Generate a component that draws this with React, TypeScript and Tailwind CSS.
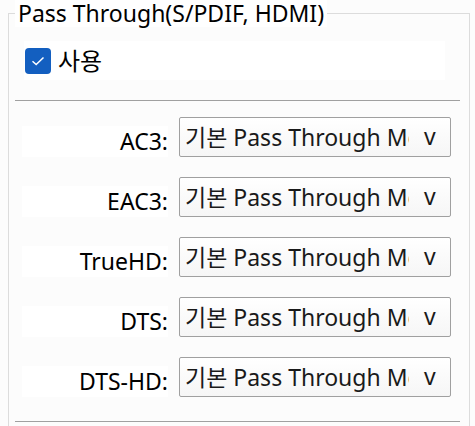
import React from "react";

const font = { fontFamily: '"Segoe UI", "Noto Sans", "Noto Sans CJK KR", sans-serif' };

const codecs = ["AC3", "EAC3", "TrueHD", "DTS", "DTS-HD"];

function Select() {
    return (
        <div className="flex h-[40px] w-[272px] items-center rounded-[2px] border border-[#a0a0a0] bg-gradient-to-b from-white to-[#f6f6f6] pl-[5px]">
            <span className="w-[224px] overflow-hidden whitespace-nowrap text-[23px] leading-[32px] text-[#1a1a1a]">
                기본 Pass Through Mode
            </span>
            <span className="ml-[15px] pb-[2px] text-[23px] leading-none text-[#1a1a1a]">v</span>
        </div>
    );
}

export default function App() {
    return (
        <div className="h-[426px] w-[475px] overflow-hidden bg-[#fcfcfc]" style={font}>
            <fieldset className="ml-[8px] w-[462px] border border-[#dcdcdc] pb-[20px] pl-[6px] pr-[9px]">
                <legend className="bg-white px-[3px] text-[23px] leading-[27px] text-black">
                    Pass Through(S/PDIF, HDMI)
                </legend>
                <div className="ml-[9px] mt-[14px] flex h-[39px] w-[421px] items-center bg-white pl-[1px]">
                    <div className="flex h-[26px] w-[26px] items-center justify-center rounded-[4px] bg-[#135fc0]">
                        <svg width="14" height="10" viewBox="0 0 14 10" fill="none">
                            <path d="M1.5 5.2 L5.2 8.5 L12.5 1.5" stroke="white" strokeWidth="1.5" />
                        </svg>
                    </div>
                    <span className="ml-[7px] text-[24px] leading-none text-black">사용</span>
                </div>
                <div className="mt-[20px] h-px w-[445px] bg-[#a0a0a0]" />
                <div className="flex flex-col gap-[20px] pt-[16px]">
                    {codecs.map((c) => (
                        <div key={c} className="flex items-end">
                            <div className="ml-[7px] flex h-[31px] w-[146px] items-center justify-end bg-white text-[23px] leading-none text-black">
                                {c}:
                            </div>
                            <div className="ml-[11px]">
                                <Select />
                            </div>
                        </div>
                    ))}
                </div>
                <div className="mt-[24px] h-px w-[445px] bg-[#a0a0a0]" />
            </fieldset>
        </div>
    );
}
